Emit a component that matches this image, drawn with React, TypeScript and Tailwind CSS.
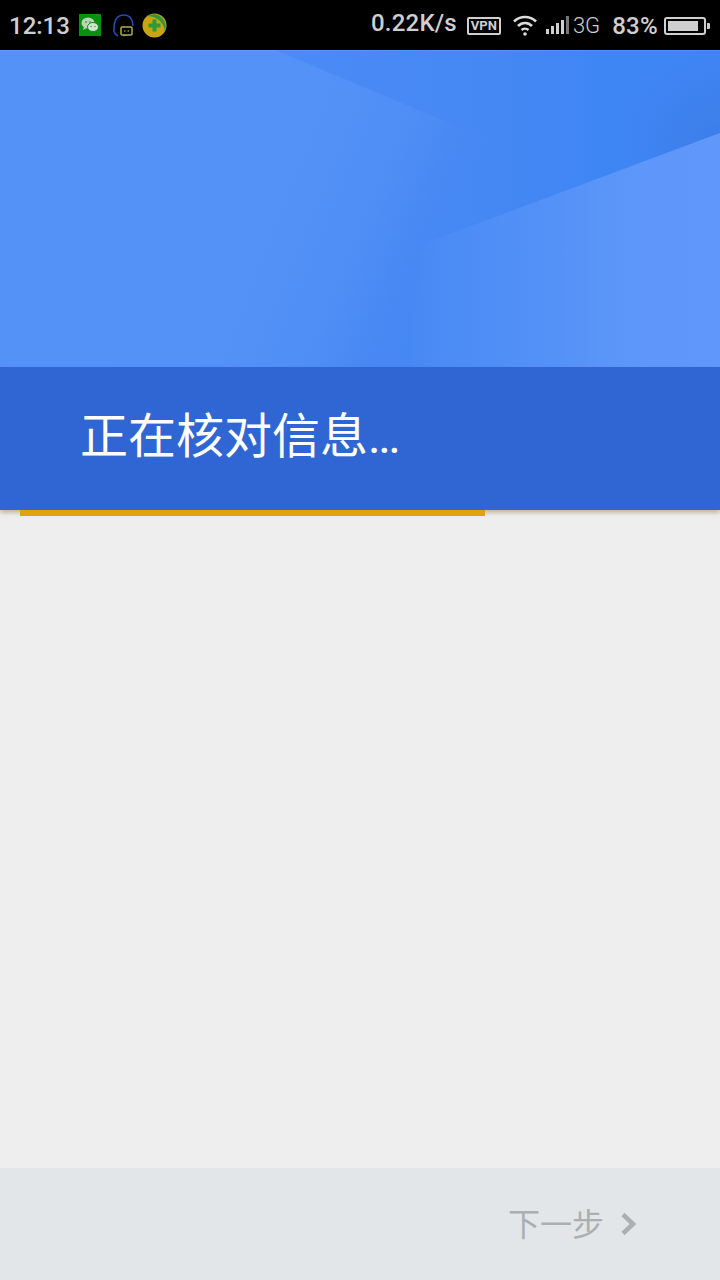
export default function App() {
  return (
    <div className="w-[720px] h-[1280px] flex flex-col overflow-hidden bg-[#eeeeee] font-['Roboto','Noto_Sans_CJK_SC',sans-serif]">
      {/* Status bar */}
      <div className="h-[50px] bg-black flex items-center shrink-0 text-[#cfcfcf]">
        <span className="ml-[9px] w-[61px] text-[24px] leading-none font-medium mt-[2px]">12:13</span>
        <svg className="ml-[9px]" width="22" height="22" viewBox="0 0 22 22">
          <rect width="22" height="22" fill="#0a900f" />
          <ellipse cx="9" cy="9" rx="6.5" ry="5.5" fill="#b9d6b6" />
          <ellipse cx="14" cy="13" rx="5.5" ry="4.5" fill="#d4e4d0" stroke="#0a900f" strokeWidth="1" />
          <path d="M5 13l-1 3 3-1.5z" fill="#b9d6b6" />
          <circle cx="7" cy="8" r="1" fill="#5f9a5f" />
          <circle cx="11" cy="8" r="1" fill="#5f9a5f" />
          <circle cx="12" cy="12.5" r=".8" fill="#5f9a5f" />
          <circle cx="16" cy="12.5" r=".8" fill="#5f9a5f" />
        </svg>
        <svg className="ml-[11px]" width="23" height="25" viewBox="0 0 23 25" fill="none">
          <path d="M6 23C3 21 1 19 2 16 2 7 5 2 12 2c6 0 9 5 9 11" stroke="#1c50b8" strokeWidth="1.6" />
          <rect x="9" y="14" width="11" height="8" rx="1" fill="#000" stroke="#a9b04a" strokeWidth="1.500" />
          <path d="M11 24l1.500-2h2z" fill="#a9b04a" />
          <path d="M12 18h1.500M15.500 18h1.500" stroke="#c5c86a" strokeWidth="1.200" />
        </svg>
        <svg className="ml-[7px]" width="25" height="25" viewBox="0 0 25 25">
          <circle cx="12.500" cy="12.500" r="12" fill="#c9a514" />
          <path d="M5.500 3a12 12 0 0 1 17 15.500C23 10 15 3.500 5.500 3z" fill="#2f9a35" />
          <path d="M10.500 6.500h4v4h4v4h-4v4h-4v-4h-4v-4h4z" fill="#2f9a35" />
        </svg>
        <span className="ml-auto text-[24px] leading-none font-medium tracking-[0.2px] mb-[5px]">0.22K/s</span>
        <span className="ml-[10px] w-[34px] h-[18px] border-2 border-[#cfcfcf] rounded-[2px] flex items-center justify-center text-[13px] leading-none font-bold mt-[1px]">VPN</span>
        <svg className="ml-[12px]" width="24" height="22" viewBox="0 0 24 22" fill="none" stroke="#dcdcdc" strokeWidth="2.600">
          <path d="M1 7.500C7 1.500 17 1.500 23 7.500" />
          <path d="M5 12C9 8 15 8 19 12" />
          <path d="M8.500 16C10.500 14.300 13.500 14.300 15.500 16" />
          <circle cx="12" cy="20" r="1.800" fill="#dcdcdc" stroke="none" />
        </svg>
        <svg className="ml-[9px]" width="24" height="20" viewBox="0 0 24 20">
          <rect x="0" y="14" width="3" height="5" fill="#cfcfcf" />
          <rect x="5" y="11" width="3" height="8" fill="#cfcfcf" />
          <rect x="10" y="8" width="3" height="11" fill="#cfcfcf" />
          <rect x="15" y="5" width="3" height="14" fill="#cfcfcf" />
          <rect x="20" y="1" width="3" height="18" fill="#777777" />
        </svg>
        <span className="ml-[3px] text-[22px] leading-none font-light mt-[1px]">3G</span>
        <span className="ml-[12px] text-[24px] leading-none font-medium tracking-[0.3px] mt-[2px]">83%</span>
        <div className="ml-[6px] mr-[10px] flex items-center mt-[1px]">
          <div className="w-[42px] h-[18px] border-2 border-[#cfcfcf] rounded-[3px] p-[2px]">
            <div className="w-[30px] h-full bg-[#cfcfcf]" />
          </div>
          <div className="ml-[1px] w-[3px] h-[6px] bg-[#cfcfcf] rounded-r-[1px]" />
        </div>
      </div>

      {/* Artwork */}
      <svg className="block shrink-0" width="720" height="317" viewBox="0 0 720 317">
        <defs>
          <linearGradient id="base" gradientUnits="userSpaceOnUse" x1="200" y1="100" x2="504" y2="225">
            <stop offset="0" stopColor="#5492f7" />
            <stop offset="0.35" stopColor="#5391f6" />
            <stop offset="0.55" stopColor="#4f8ef5" />
            <stop offset="0.72" stopColor="#4788f3" />
            <stop offset="0.84" stopColor="#4688f3" />
          </linearGradient>
          <linearGradient id="dark" gradientUnits="userSpaceOnUse" x1="275" y1="0" x2="600" y2="0">
            <stop offset="0" stopColor="#4a8bf6" />
            <stop offset="0.66" stopColor="#4688f3" />
            <stop offset="1" stopColor="#3f86f5" />
          </linearGradient>
          <linearGradient id="light" gradientUnits="userSpaceOnUse" x1="410" y1="0" x2="720" y2="0">
            <stop offset="0" stopColor="#4788f3" />
            <stop offset="0.1" stopColor="#4a8bf5" />
            <stop offset="0.48" stopColor="#5592f7" />
            <stop offset="0.74" stopColor="#5e97f9" />
            <stop offset="1" stopColor="#6098fa" />
          </linearGradient>
          <radialGradient id="shade" gradientUnits="userSpaceOnUse" cx="720" cy="95" r="105">
            <stop offset="0" stopColor="#3a72d8" stopOpacity="0.45" />
            <stop offset="1" stopColor="#3a72d8" stopOpacity="0" />
          </radialGradient>
        </defs>
        <rect width="720" height="317" fill="url(#base)" />
        <polygon points="275,0 720,0 720,83 420,195 490,90" fill="url(#dark)" />
        <polygon points="720,0 720,83 500,165 500,0" fill="url(#shade)" />
        <polygon points="720,83 420,195 410,317 720,317" fill="url(#light)" />
        <rect width="720" height="1" fill="#ffffff" opacity="0.1" />
      </svg>

      {/* Title band */}
      <div className="h-[143px] shrink-0 bg-[#3066d3] flex items-center pl-[80px] shadow-[0_3px_4px_rgba(130,110,50,0.4)] relative z-10">
        <span className="text-white text-[48px] leading-none mb-[4px]">正在核对信息<span className="tracking-[-2.5px]">...</span></span>
      </div>

      {/* Progress */}
      <div className="ml-[20px] w-[465px] h-[6px] bg-[#e0a30d] shrink-0 relative z-20" />

      <div className="flex-1 bg-[#eeeeee]" />

      {/* Bottom bar */}
      <div className="h-[112px] shrink-0 bg-[#e2e6e9] flex items-center justify-end pr-[82px]">
        <span className="text-[32px] leading-none text-[#abafb2] mt-[2px]">下一步</span>
        <svg className="ml-[16px]" width="18" height="24" viewBox="0 0 18 24" fill="none" stroke="#abafb2" strokeWidth="4.500">
          <path d="M3 2.500L13 12 3 21.500" />
        </svg>
      </div>
    </div>
  );
}
